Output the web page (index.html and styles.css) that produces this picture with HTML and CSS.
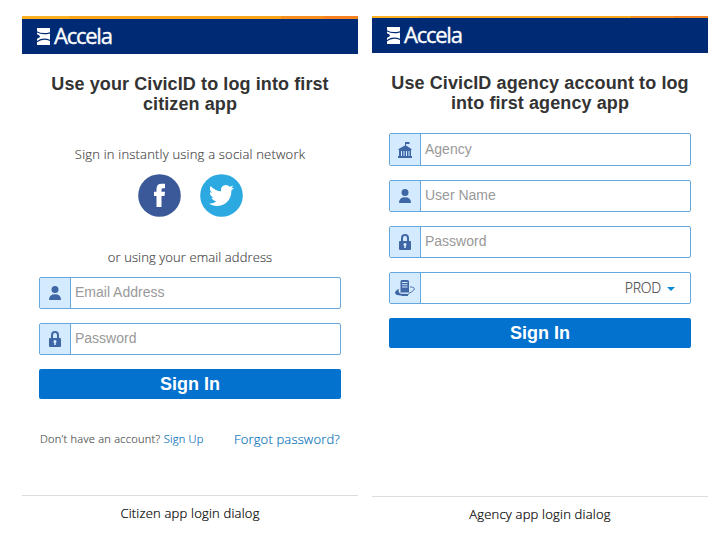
FILE: index.html
```html
<!DOCTYPE html>
<html lang="en">
<head>
<meta charset="utf-8">
<title>Accela login dialogs</title>
<link rel="stylesheet" href="styles.css">
</head>
<body>
<svg class="defs" aria-hidden="true">
  <symbol id="mark" viewBox="0 0 13 17">
    <path fill="#fff" d="M0 0H13V17H0Z"/>
    <path fill="none" stroke="#002b74" stroke-width="1.200" d="M-.5 3.600Q5.500 7.200 13.500 4.600M-.5 14Q5.500 9.200 13.500 12.600"/>
    <path fill="#002b74" d="M0 6.200Q2.800 7.200 3 8.500Q2.800 9.800 0 10.800Z"/>
  </symbol>
  <symbol id="user" viewBox="0 0 12 14">
    <circle cx="6" cy="3.500" r="3.500"/><path d="M0 14Q0 8.200 6 8.200T12 14Z"/>
  </symbol>
  <symbol id="lock" viewBox="0 0 12 16">
    <path fill-rule="evenodd" d="M2 7V4.200Q2 0 6 0T10 4.200V7H11Q12 7 12 8V15Q12 16 11 16H1Q0 16 0 15V8Q0 7 1 7ZM4 7H8V4.300Q8 1.800 6 1.800T4 4.300ZM6 9A1.700 1.700 0 0 0 5.200 12.100V14H6.800V12.100A1.700 1.700 0 0 0 6 9Z"/>
  </symbol>
  <symbol id="agency" viewBox="0 0 14 16">
    <path d="M7 0H11.500V2H8V3.500L13.500 7V8H13V14H14V16H0V14H1V8H.5V7L7 3.500Z"/>
    <path fill="#d4eaff" d="M3 9H4V14H3ZM5.500 9H6.500V14H5.500ZM8 9H9V14H8ZM10.500 9H11.500V14H10.500Z"/>
  </symbol>
  <symbol id="server" viewBox="0 0 20 16">
    <path d="M7 0H12.500Q14 0 14 1.500V12.500H5.500V1.500Q5.500 0 7 0Z"/>
    <path fill="#d4eaff" d="M7 2H12.500V3H7ZM7 4.200H12.500V5.200H7ZM7 6.400H12.500V7.400H7Z"/>
    <path d="M4 8.800Q-.5 11 .1 13.300Q1 15.500 6 15.600L12.500 15.700L14 14L6 13.800Q2.500 13 4 8.800Z"/>
    <path d="M6.500 14H13V16H6.500Z"/>
    <path fill="none" stroke="#3f66a5" stroke-width=".9" d="M15 6.800Q21 7.500 19 9.800Q17 12.200 13.500 13.500"/>
  </symbol>
</svg>
<main class="dialogs">
  <section class="dialog citizen">
    <header class="brand"><svg class="mark"><use href="#mark"/></svg><span>Accela</span></header>
    <div class="body">
      <h1>Use your CivicID to log into first<br>citizen app</h1>
      <p class="hint social-hint"><span>Sign in instantly using a social network</span></p>
      <div class="social">
        <svg viewBox="0 0 43 43"><circle cx="21.500" cy="21.500" r="21.300" fill="#3b5998"/><path fill="#fff" d="M18.500 33V22H16V17.800H18.500V15Q18.500 9.800 23.500 9.800H27V14.200H25Q23.500 14.200 23.500 15.600V17.800H27L26.500 22H23.500V33Z"/></svg>
        <svg viewBox="0 0 43 43"><circle cx="21.500" cy="21.500" r="21.300" fill="#2ca9e1"/><path fill="#fff" d="M9 29.500Q13.500 30 16.300 27.300Q12.500 26.700 11.500 23.800H13.700Q9.800 22 9.900 18.200L12 18.800Q8.600 15.800 10.700 12Q15 17.100 21 17.300Q20.500 11.300 26 11.100Q28.200 11.100 29.800 12.700L33 11.500Q32.600 13.200 31.200 14.300L34 13.700Q33 15.300 31.400 16.400Q31.600 23.800 26.500 28.500Q21.500 32.700 14.800 31.700Q11.500 31.200 9 29.500Z"/></svg>
      </div>
      <p class="hint email-hint"><span>or using your email address</span></p>
      <form class="fields">
        <label class="field"><span class="icon"><svg class="user"><use href="#user"/></svg></span><span class="placeholder">Email Address</span></label>
        <label class="field"><span class="icon"><svg class="lock"><use href="#lock"/></svg></span><span class="placeholder">Password</span></label>
        <button type="button">Sign In</button>
      </form>
      <div class="links"><p><span class="question">Don’t have an account?</span> <a class="signup">Sign Up</a></p><a class="forgot">Forgot password?</a></div>
    </div>
    <footer><span>Citizen app login dialog</span></footer>
  </section>
  <section class="dialog agency">
    <header class="brand"><svg class="mark"><use href="#mark"/></svg><span>Accela</span></header>
    <div class="body">
      <h1>Use CivicID agency account to log<br>into first agency app</h1>
      <form class="fields">
        <label class="field tall"><span class="icon"><svg class="building"><use href="#agency"/></svg></span><span class="placeholder">Agency</span></label>
        <label class="field"><span class="icon"><svg class="user"><use href="#user"/></svg></span><span class="placeholder">User Name</span></label>
        <label class="field"><span class="icon"><svg class="lock"><use href="#lock"/></svg></span><span class="placeholder">Password</span></label>
        <div class="field"><span class="icon"><svg class="server"><use href="#server"/></svg></span><span class="select">PROD<i class="caret"></i></span></div>
        <button type="button">Sign In</button>
      </form>
    </div>
    <footer><span>Agency app login dialog</span></footer>
  </section>
</main>
</body>
</html>
```
FILE: styles.css
```css
* { box-sizing: border-box; }
body { margin: 0; background: #fff; font-family: "Liberation Sans", Arial, sans-serif; }
h1, p { margin: 0; }
.defs { display: none; }
.dialogs { display: flex; gap: 14px; padding: 16px 18px 0 22px; height: 534px; }
.dialog { width: 336px; display: flex; flex-direction: column; }
.brand { flex: none; height: 38px; background: linear-gradient(90deg, #fdb022 0 14%, #faa61a 14% 77%, #f78f1e 77% 90%, #f5821f 90%) 0 0 / 100% 3px no-repeat #002b74; color: #fff; display: flex; align-items: center; padding: 3px 0 0 15px; font: 22px/33px "Open Sans", sans-serif; letter-spacing: -1.25px; -webkit-text-stroke: .35px #fff; }
.brand span { padding-bottom: 2px; }
.agency .brand { height: 37px; padding-top: 2px; background-size: 100% 2px; }
.mark { width: 13px; height: 17px; margin-right: 4px; }
.body { flex: none; height: 441px; padding: 20px 17px 0; }
.agency .body { height: 443px; }
h1 { font-size: 18px; line-height: 20px; text-align: center; color: #333; white-space: nowrap; letter-spacing: .1px; }
.hint { font: 300 13px/20px "Open Sans", sans-serif; color: #444; -webkit-text-stroke: .15px #444; text-align: center; white-space: nowrap; letter-spacing: .2px; }
.social-hint { margin-top: 30px; }
.social { display: flex; justify-content: center; gap: 19px; margin-top: 10px; }
.social svg { width: 43px; height: 43px; }
.email-hint { margin-top: 30px; letter-spacing: .1px; }
.fields { display: flex; flex-direction: column; gap: 14px; margin-top: 10px; }
.agency .fields { margin-top: 20px; }
.field { display: flex; height: 32px; border: 1px solid #65a8df; border-radius: 2px; overflow: hidden; }
.tall { height: 33px; }
.icon { width: 31px; border-right: 1px solid #65a8df; background: #d4eaff; display: flex; align-items: center; justify-content: center; color: #3f66a5; }
.icon svg { fill: currentColor; }
.user { width: 12px; height: 14px; }
.lock { width: 12px; height: 16px; }
.building { width: 14px; height: 16px; }
.server { width: 20px; height: 16px; }
.placeholder { padding-left: 4px; font-size: 14px; line-height: 29px; color: #999; }
.tall .placeholder { line-height: 31px; }
.select { flex: 1; display: flex; align-items: center; justify-content: flex-end; padding-right: 15px; font: 300 14px/30px "Open Sans", sans-serif; color: #444; -webkit-text-stroke: .15px #444; letter-spacing: -.2px; }
.caret { border: 4px solid transparent; border-top-color: #0788d1; border-bottom: 0; margin: 2px 0 0 6px; }
button { height: 30px; border: 0; border-radius: 2px; background: #0272ce; color: #fff; font: bold 18px/30px "Liberation Sans", Arial, sans-serif; padding: 0; }
.links { display: flex; justify-content: space-between; align-items: center; margin-top: 30px; padding: 0 1px; font: 300 11px/20px "Open Sans", sans-serif; color: #444; -webkit-text-stroke: .15px; white-space: nowrap; letter-spacing: .28px; }
.links a { color: #006eb8; }
.links .forgot { font-size: 13px; letter-spacing: .17px; }
footer { border-top: 1px solid #ddd; padding-top: 7px; text-align: center; color: #000; font: 300 13px/20px "Open Sans", sans-serif; -webkit-text-stroke: .2px #000; white-space: nowrap; letter-spacing: .2px; }
```
